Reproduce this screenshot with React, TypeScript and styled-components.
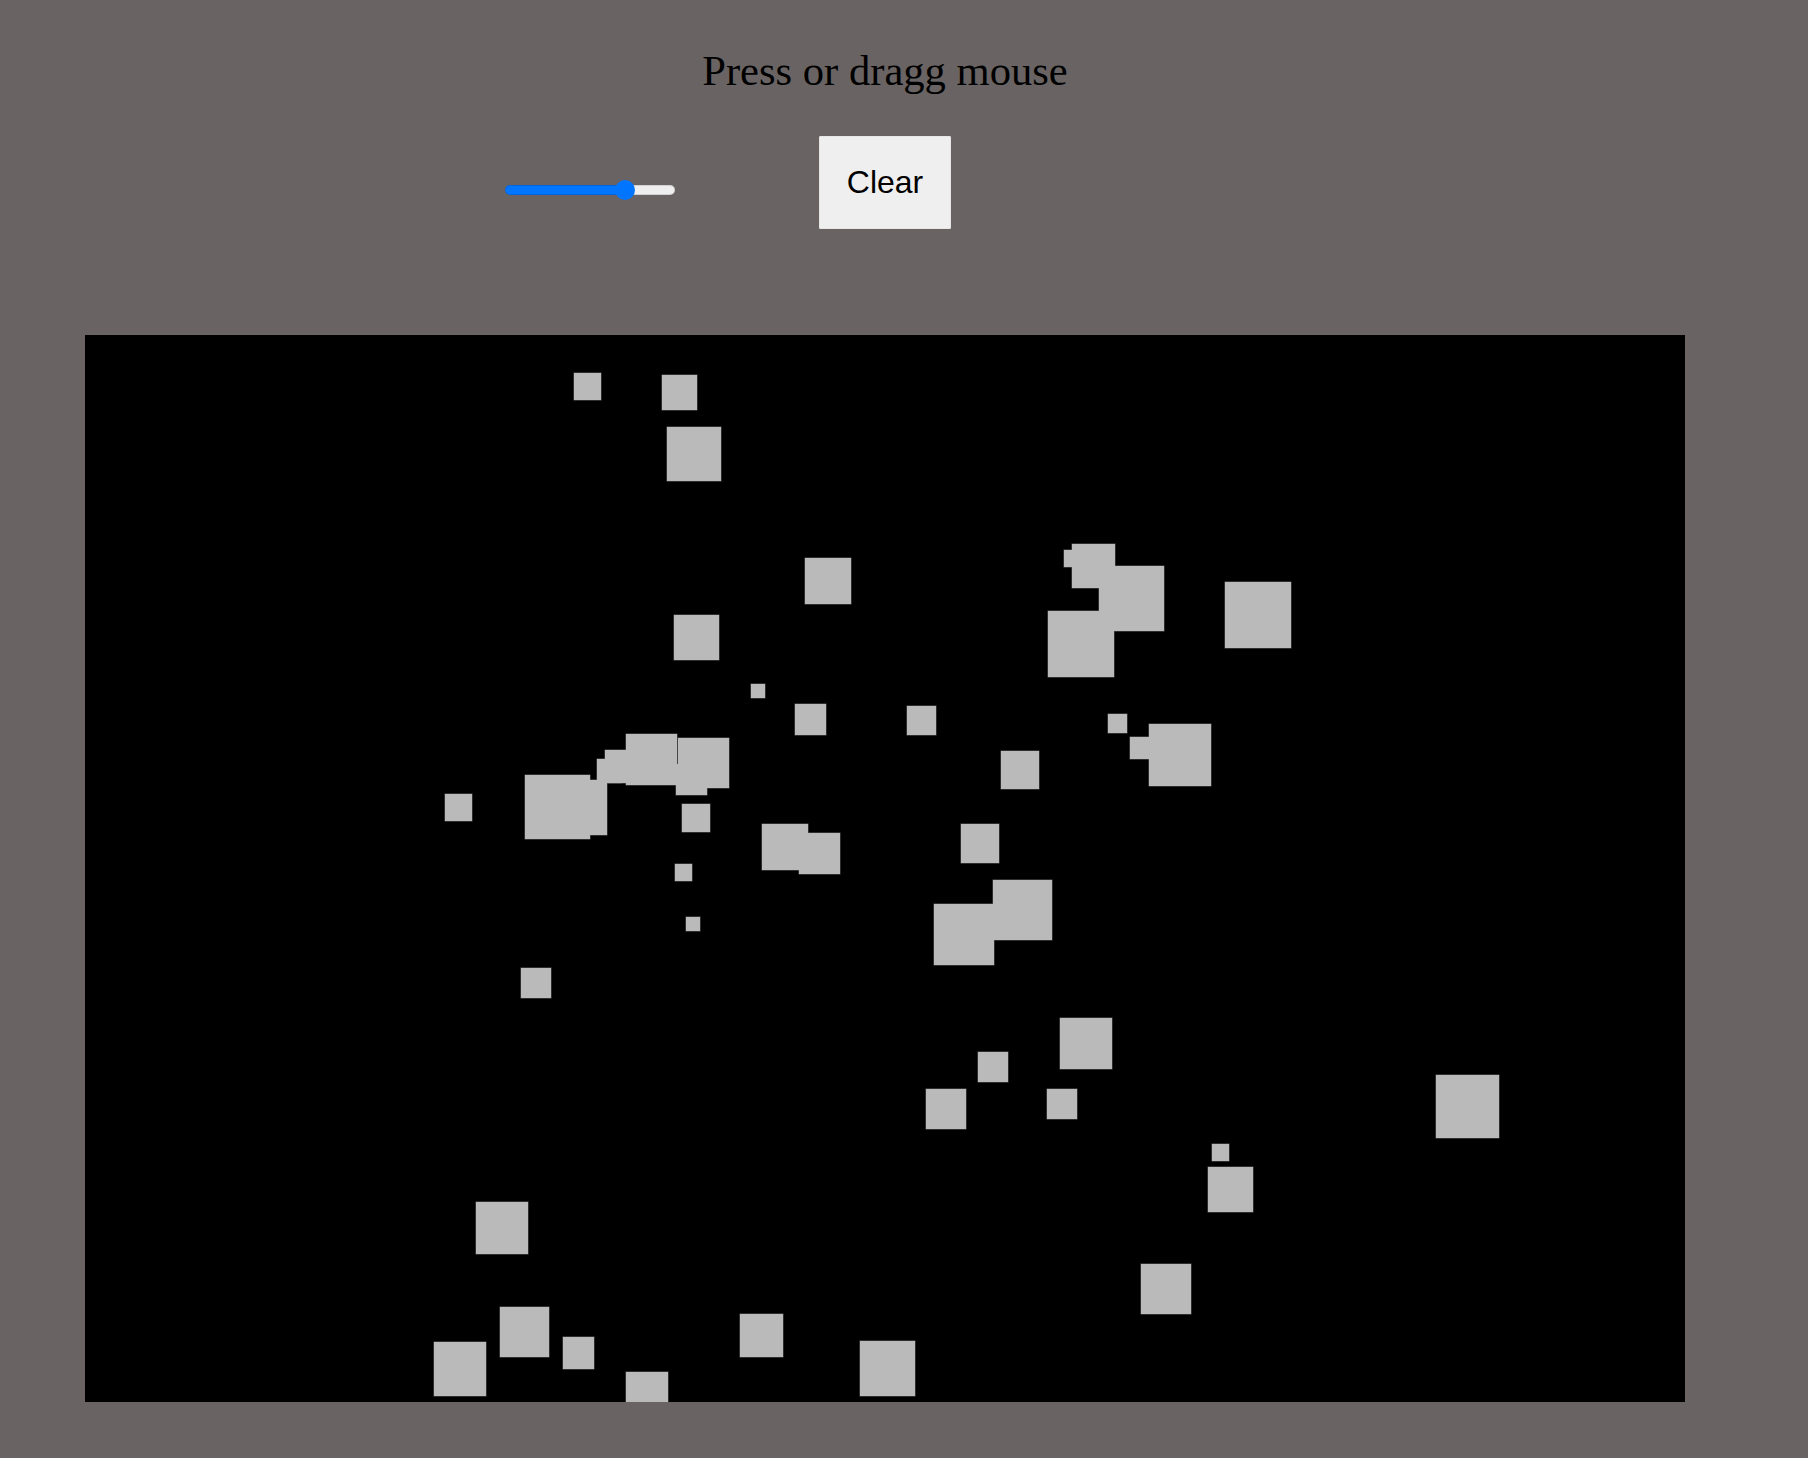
import { useState } from "react";
import styled, { createGlobalStyle } from "styled-components";

const GlobalStyle = createGlobalStyle`
  html, body {
    margin: 0;
    background-color: #696463;
  }
`;

const Page = styled.div`
  width: 1770px;
  font-family: "Liberation Serif", "Times New Roman", serif;
`;

const Title = styled.h1`
  margin: 0;
  padding-top: 47px;
  font-size: 42.6px;
  font-weight: normal;
  line-height: 48px;
  color: #000;
  text-align: center;
`;

const Controls = styled.div`
  margin-top: 41px;
  display: grid;
  grid-template-columns: repeat(3, 295px);
  justify-content: center;
  align-items: start;
  height: 93px;
`;

const Slider = styled.input<{ $fill: number }>`
  -webkit-appearance: none;
  appearance: none;
  justify-self: center;
  width: 170px;
  height: 20px;
  margin: 44px 0 0;
  padding: 0;
  background: transparent;

  &::-webkit-slider-runnable-track {
    height: 10px;
    border-radius: 5px;
    background: linear-gradient(
      to right,
      #0075ff 0 ${(p) => p.$fill}%,
      #efefef ${(p) => p.$fill}% 100%
    );
    box-shadow: inset 0 0 0 1px rgba(0, 0, 0, 0.12);
  }

  &::-webkit-slider-thumb {
    -webkit-appearance: none;
    appearance: none;
    width: 20px;
    height: 20px;
    margin-top: -5px;
    border: none;
    border-radius: 50%;
    background: #0075ff;
  }
`;

const ClearButton = styled.button`
  justify-self: center;
  width: 132px;
  height: 93px;
  padding: 0;
  border: 1px solid #e6e6e6;
  border-radius: 1px;
  background-color: #efefef;
  color: #000;
  font-family: "Liberation Sans", Arial, sans-serif;
  font-size: 32px;
  cursor: pointer;
`;

const Board = styled.svg`
  display: block;
  margin: 106px 0 0 85px;
  background-color: #000;
  cursor: crosshair;
`;

type Square = { x: number; y: number; w: number; h: number };

const W = 1600;
const H = 1067;
const OX = 85;
const OY = 335;

// page coordinates of the squares in the screenshot
const seed: [number, number, number, number][] = [
  [574, 373, 27, 27], [662, 375, 35, 35], [667, 427, 54, 54], [805, 558, 46, 46],
  [674, 615, 45, 45], [751, 684, 14, 14], [795, 704, 31, 31], [907, 706, 29, 29],
  [1064, 550, 17, 17], [1072, 544, 43, 44], [1099, 566, 65, 65], [1048, 611, 66, 66],
  [1225, 582, 66, 66], [1108, 714, 19, 19], [1130, 737, 22, 22], [1149, 724, 62, 62],
  [1001, 751, 38, 38], [552, 780, 55, 55], [525, 775, 65, 64], [597, 759, 24, 24],
  [605, 750, 33, 33], [626, 734, 51, 51], [678, 738, 51, 50], [676, 764, 31, 31],
  [682, 804, 28, 28], [445, 794, 27, 27], [762, 824, 46, 46], [799, 833, 41, 41],
  [675, 864, 17, 17], [686, 917, 14, 14], [521, 968, 30, 30], [961, 824, 38, 39],
  [993, 880, 59, 60], [934, 904, 60, 61], [1060, 1018, 52, 51], [978, 1052, 30, 30],
  [926, 1089, 40, 40], [1047, 1089, 30, 30], [1436, 1075, 63, 63], [1212, 1144, 17, 17],
  [1208, 1167, 45, 45], [476, 1202, 52, 52], [1141, 1264, 50, 50], [500, 1307, 49, 50],
  [434, 1342, 52, 54], [563, 1337, 31, 32], [626, 1372, 42, 42], [740, 1314, 43, 43],
  [860, 1341, 55, 55],
];

const initial: Square[] = seed.map(([x, y, w, h]) => ({ x: x - OX, y: y - OY, w, h }));

const App = () => {
  const [squares, setSquares] = useState<Square[]>(initial);
  const [size, setSize] = useState(73);

  const thumbFrac = size / 100;
  const fill = ((thumbFrac * 150 + 10) / 170) * 100;

  const addSquare = (e: React.MouseEvent<SVGSVGElement>) => {
    const box = e.currentTarget.getBoundingClientRect();
    const s = Math.max(8, Math.round((size / 100) * 60 * (0.5 + Math.random() * 0.7)));
    setSquares((prev) => [
      ...prev,
      { x: e.clientX - box.left - s / 2, y: e.clientY - box.top - s / 2, w: s, h: s },
    ]);
  };

  return (
    <Page>
      <GlobalStyle />
      <Title>Press or dragg mouse</Title>
      <Controls>
        <Slider
          type="range"
          min={0}
          max={100}
          value={size}
          $fill={fill}
          onChange={(e) => setSize(Number(e.target.value))}
        />
        <ClearButton onClick={() => setSquares([])}>Clear</ClearButton>
      </Controls>
      <Board
        width={W}
        height={H}
        viewBox={`0 0 ${W} ${H}`}
        onMouseDown={addSquare}
        onMouseMove={(e) => {
          if (e.buttons === 1) addSquare(e);
        }}
      >
        {/* outlines first so only the outer edge of each blob shows */}
        <g fill="none" stroke="#5c5c5c" strokeWidth={1}>
          {squares.map((s, i) => (
            <rect key={i} x={s.x} y={s.y} width={s.w} height={s.h} />
          ))}
        </g>
        <g fill="#bababa">
          {squares.map((s, i) => (
            <rect key={i} x={s.x} y={s.y} width={s.w} height={s.h} />
          ))}
        </g>
      </Board>
    </Page>
  );
};

export default App;
